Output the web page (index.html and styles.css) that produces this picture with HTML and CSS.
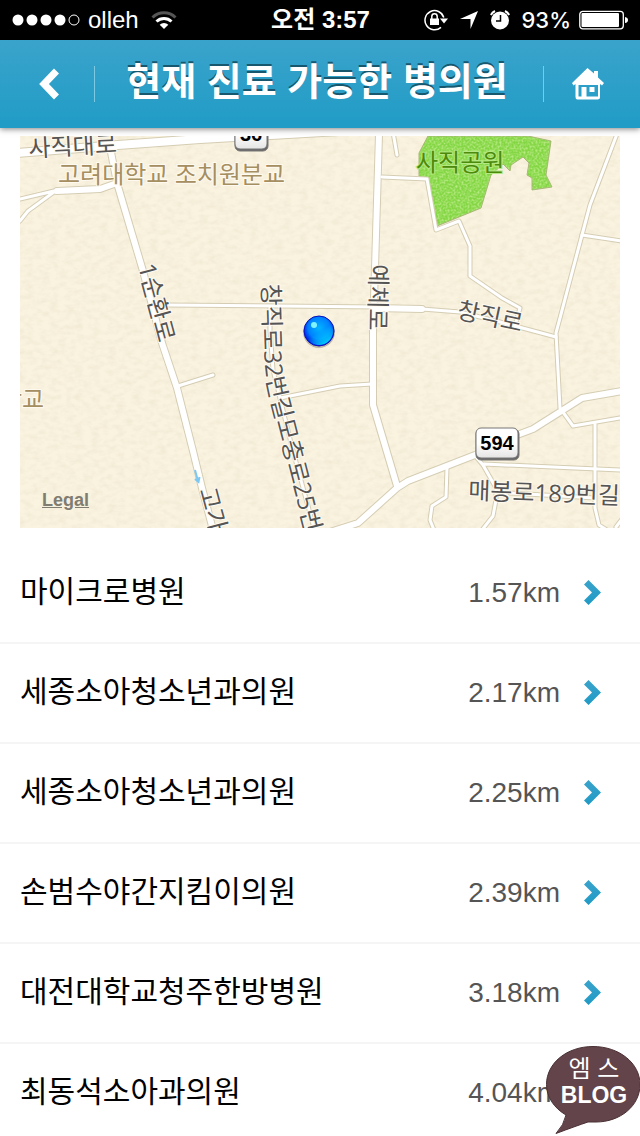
FILE: index.html
```html
<!DOCTYPE html>
<html lang="ko">
<head>
  <meta charset="UTF-8">
  <meta name="viewport" content="width=device-width, initial-scale=1">
  <title>현재 진료 가능한 병의원</title>
  <link rel="stylesheet" href="styles.css">
</head>
<body>
  <div class="app">
    <div class="status-bar">
      <div class="status-left">
        <svg width="68" height="12" viewBox="0 0 68 12" fill="#fff">
          <circle cx="6" cy="6" r="5.5"/>
          <circle cx="20" cy="6" r="5.5"/>
          <circle cx="34" cy="6" r="5.5"/>
          <circle cx="48" cy="6" r="5.5"/>
          <circle cx="62" cy="6" r="5" fill="none" stroke="#fff"/>
        </svg>
        <span>olleh</span>
        <svg class="wifi" width="26" height="20" viewBox="0 0 26 20" fill="none" stroke="#fff" stroke-width="3">
          <path d="M1.5 7.5a16.500 16.500 0 0 1 23 0" stroke="#555"/>
          <path d="M5.500 11.500a10.800 10.800 0 0 1 15 0"/>
          <path d="M13 19l-4.300-4.300a6.200 6.200 0 0 1 8.600 0z" fill="#fff" stroke="none"/>
        </svg>
      </div>
      <div class="status-time">오전 3:57</div>
      <div class="status-right">
        <svg width="24" height="22" viewBox="0 0 24 22">
          <path d="M19.800 8.500A9.600 9.600 0 1 0 17 18.400" fill="none" stroke="#fff" stroke-width="1.500"/>
          <path d="M16 9.500h8l-4 5z" fill="#fff"/>
          <rect x="6" y="9.500" width="9" height="6.500" fill="#fff"/>
          <path d="M7.800 10V7.500a2.700 2.700 0 0 1 5.400 0V10" fill="none" stroke="#fff" stroke-width="1.500"/>
        </svg>
        <svg width="18" height="18" viewBox="0 0 18 18">
          <path d="M18 0L10.500 18V8H0z" fill="#fff"/>
        </svg>
        <svg width="20" height="20" viewBox="0 0 20 20">
          <circle cx="10" cy="10.500" r="9" fill="#fff"/>
          <path d="M.8 5A10 10 0 0 1 5 1M15 1a10 10 0 0 1 4.200 4" fill="none" stroke="#fff" stroke-width="2"/>
          <path d="M10.500 5v6H6" fill="none" stroke="#000" stroke-width="1.500"/>
        </svg>
        <span class="percent">93%</span>
        <svg width="50" height="20" viewBox="0 0 50 20">
          <rect x=".8" y="1.300" width="43.500" height="17.500" rx="3" fill="none" stroke="#fff" stroke-width="1.300"/>
          <rect x="2.500" y="3" width="37.500" height="14" rx="1" fill="#fff"/>
          <path d="M46 7q3 .5 3 3t-3 3z" fill="#fff"/>
        </svg>
      </div>
    </div>

    <header class="header">
      <button class="header-btn" aria-label="뒤로">
        <svg width="20" height="32" viewBox="0 0 20 32" fill="none">
          <path d="M17.500 3L5 16l12.500 13" stroke="#fff" stroke-width="7"/>
        </svg>
      </button>
      <span class="divider"></span>
      <h1>현재 진료 가능한 병의원</h1>
      <span class="divider"></span>
      <button class="header-btn" aria-label="홈">
        <svg width="32" height="32" viewBox="0 0 32 32" fill="#fff">
          <path fill-rule="evenodd" d="M15.500 0L22 5.500V3h4v6.500l6 5.500-2 2.500-2-1.500v13q0 2.500-2.500 2.500h-20Q3.500 31.500 3.500 29V16l-2 1.500L0 15zM6.500 18v10.500h3V19h5v9.500h11.500V17H6.500zM17.500 19h5v5h-5z"/>
        </svg>
      </button>
    </header>

    <div class="map">
      <svg class="map-canvas" viewBox="20 136 600 392">
        <defs>
          <filter id="paper" x="0" y="0" width="100%" height="100%">
            <feTurbulence type="fractalNoise" baseFrequency="0.12 0.2" numOctaves="3" seed="4"/>
            <feColorMatrix values="0 0 0 0 0.55  0 0 0 0 0.48  0 0 0 0 0.3  0.3 0 0 0 -0.11"/>
          </filter>
          <filter id="grass" x="0" y="0" width="100%" height="100%">
            <feTurbulence type="fractalNoise" baseFrequency="0.5" numOctaves="2" seed="9"/>
            <feColorMatrix values="0 0 0 0 0.8  0 0 0 0 1  0 0 0 0 0.5  1.2 0 0 0 -0.45"/>
          </filter>
          <radialGradient id="pin" cx=".5" cy=".4" r=".6">
            <stop offset="0" stop-color="#00b4ff"/>
            <stop offset=".6" stop-color="#0080ff"/>
            <stop offset="1" stop-color="#0000d8"/>
          </radialGradient>
          <linearGradient id="pinGlow" x1=".3" y1=".2" x2=".8" y2="1">
            <stop offset=".4" stop-color="#00e0ff" stop-opacity="0"/>
            <stop offset="1" stop-color="#00f0ff"/>
          </linearGradient>
          <linearGradient id="shield" x1="0" y1="0" x2="0" y2="1">
            <stop offset=".5" stop-color="#fff"/>
            <stop offset="1" stop-color="#e4e4e4"/>
          </linearGradient>
          <clipPath id="parkClip">
            <path d="M428 136l-9 17v23l9 4 9 46 44-18 10-33 12-11 7 7 1-6 12-8 6 6-2 12 5 3v12l20-3-6-12 5-34-23-5z"/>
          </clipPath>
          <path id="longLabel" d="M262 284L264 350Q265 375 269 392L307 540"/>
          <g id="thin">
            <path d="M20 199L54 191M54 192L28 211L20 221"/>
            <path d="M167 305L380 307M422 309L460 312L500 322L556 337"/>
            <path d="M270 308L270 330L273 370L280 398L293 451L314 528"/>
            <path d="M280 398L320 390L340 386L372 384"/>
            <path d="M178 386L213 375"/>
            <path d="M382 177L427 179L436 230L459 221L470 246V276L502 298L520 308L516 322"/>
            <path d="M393 132L397 155"/>
            <path d="M617 134L590 205L582 235L556 333L560 408L573 426L620 418"/>
            <path d="M582 235L622 241"/>
            <path d="M477 458L483 465L496 488V500L493 516L482 530M484 464L622 470"/>
            <path d="M595 424V508L599 525L610 532M510 493L595 498M447 468L446 497L432 506L430 520L434 530M616 527L622 519"/>
          </g>
          <g id="medium">
            <path d="M110 147L117 183L143 271L162 343L177 388L193 451L202 488L213 530"/>
            <path d="M57 191L100 189L117 183"/>
            <path d="M379 134L375 268L373 328V405L397 486M375 308L422 309"/>
            <path d="M330 532L358 523L397 488L408 481L475 455L517 435L533 429L582 398L622 391"/>
          </g>
          <path id="wide" d="M18 153L118 145L200 139L340 131"/>
        </defs>

        <rect x="20" y="136" width="600" height="392" fill="#faf3e0"/>
        <rect x="20" y="136" width="600" height="392" filter="url(#paper)"/>
        <g clip-path="url(#parkClip)">
          <rect x="410" y="136" width="150" height="100" fill="#84d645"/>
          <rect x="410" y="136" width="150" height="100" filter="url(#grass)"/>
        </g>
        <path class="park-edge" d="M428 136l-9 17v23l9 4 9 46 44-18 10-33 12-11 7 7 1-6 12-8 6 6-2 12 5 3v12l20-3-6-12 5-34-23-5z"/>

        <!-- roads: casing first, then the white fill -->
        <g class="casing">
          <use href="#thin" stroke-width="5"/>
          <use href="#medium" stroke-width="8"/>
          <use href="#wide" stroke-width="10"/>
        </g>
        <g class="road">
          <use href="#thin" stroke-width="3"/>
          <use href="#medium" stroke-width="6"/>
          <use href="#wide" stroke-width="8"/>
        </g>
        <path d="M195 470l3 11M195 479l3.500 3 1-5" fill="none" stroke="#7cc8f5" stroke-width="2"/>

        <g class="road-name">
          <text transform="translate(29 157) rotate(-3)">사직대로</text>
          <text transform="translate(138 266) rotate(75)">1순환로</text>
          <text><textPath href="#longLabel">창직로32번길모충로25번길</textPath></text>
          <text transform="translate(370 264) rotate(91)">예체로</text>
          <text transform="translate(456 318) rotate(12)">창직로</text>
          <text transform="translate(468 499) rotate(2)">매봉로189번길</text>
          <text transform="translate(199 490) rotate(75)">고가</text>
        </g>
        <g class="place-name">
          <text x="58" y="183">고려대학교 조치원분교</text>
          <text x="0" y="408">학교</text>
          <text class="park-name" x="416" y="171">사직공원</text>
        </g>

        <g class="shield">
          <rect x="235" y="120" width="33" height="31" rx="5" fill="#666"/>
          <rect x="235" y="119" width="32" height="30" rx="5"/>
          <text x="251" y="141">36</text>
          <rect x="476" y="429" width="43" height="31" rx="5" fill="#666"/>
          <rect x="476" y="428" width="42" height="30" rx="5"/>
          <text x="497" y="450">594</text>
        </g>

        <circle cx="319" cy="332" r="16" fill="#635d50" opacity=".4"/>
        <circle cx="319" cy="331" r="15" fill="url(#pin)" stroke="#0a12c0"/>
        <circle cx="319" cy="331" r="14" fill="url(#pinGlow)"/>
        <circle cx="314" cy="325" r="3" fill="#7ff4ff"/>
      </svg>
      <a class="legal" href="#legal">Legal</a>
    </div>

    <ul class="list">
      <li><a href="#1"><span class="name">마이크로병원</span><span class="distance">1.57km</span><svg class="arrow" viewBox="0 0 18 26"><use href="#arrow"/></svg></a></li>
      <li><a href="#2"><span class="name">세종소아청소년과의원</span><span class="distance">2.17km</span><svg class="arrow" viewBox="0 0 18 26"><use href="#arrow"/></svg></a></li>
      <li><a href="#3"><span class="name">세종소아청소년과의원</span><span class="distance">2.25km</span><svg class="arrow" viewBox="0 0 18 26"><use href="#arrow"/></svg></a></li>
      <li><a href="#4"><span class="name">손범수야간지킴이의원</span><span class="distance">2.39km</span><svg class="arrow" viewBox="0 0 18 26"><use href="#arrow"/></svg></a></li>
      <li><a href="#5"><span class="name">대전대학교청주한방병원</span><span class="distance">3.18km</span><svg class="arrow" viewBox="0 0 18 26"><use href="#arrow"/></svg></a></li>
      <li><a href="#6"><span class="name">최동석소아과의원</span><span class="distance">4.04km</span><svg class="arrow" viewBox="0 0 18 26"><use href="#arrow"/></svg></a></li>
    </ul>

    <a class="blog-badge" href="#blog">
      <svg viewBox="0 0 94 90">
        <path d="M47 .5C73 .5 94 17 94 38.500S74 76 50 76H42Q30 80 10 87.500Q18 79 20 69C8 62 .5 51 .5 38.500C.5 17 21 .5 47 .5z" fill="#62444a" stroke="#4a3035"/>
        <text class="badge-ko" x="48" y="31">엠 스</text>
        <text class="badge-en" x="48" y="57">BLOG</text>
      </svg>
    </a>
  </div>

  <svg class="sprite" width="0" height="0">
    <defs>
      <linearGradient id="arrowFill" x1="0" y1="0" x2="0" y2="1">
        <stop offset="0" stop-color="#39a3cb"/>
        <stop offset="1" stop-color="#1f9bc6"/>
      </linearGradient>
      <path id="arrow" d="M0 4.500L4.500 0L17 12.500L4.500 25L0 20.500L8 12.500z" fill="url(#arrowFill)"/>
    </defs>
  </svg>
</body>
</html>
```

FILE: styles.css
```css
* {
  box-sizing: border-box;
}
body {
  margin: 0;
  background-color: #fff;
  color: #000;
  font-family: "Liberation Sans", "Noto Sans CJK KR", sans-serif;
}
.app {
  position: relative;
  display: flex;
  flex-direction: column;
  height: 100vh;
  overflow: hidden;
}

/* status bar */
.status-bar {
  display: grid;
  grid-template-columns: 1fr auto 1fr;
  align-items: center;
  height: 40px;
  flex: none;
  padding: 0 11px 0 12px;
  background-color: #000;
  color: #fff;
  font-size: 24px;
  line-height: 40px;
}
.status-left {
  display: flex;
  align-items: center;
  gap: 8px;
}
.wifi {
  margin-left: 4px;
}
.status-time {
  font-weight: bold;
}
.status-right {
  display: flex;
  align-items: center;
  justify-content: flex-end;
  gap: 12px;
}
.percent {
  font-family: Inter, sans-serif;
  font-size: 22px;
  font-weight: 500;
  margin-right: -4px;
}

/* header */
.header {
  position: relative;
  display: flex;
  align-items: center;
  height: 88px;
  flex: none;
  background: linear-gradient(#3aa3cb, #209cc6);
  box-shadow: 0 1px 6px rgba(0, 0, 0, 0.5);
}
.header-btn {
  display: flex;
  align-items: center;
  justify-content: center;
  width: 96px;
  height: 88px;
  padding: 0 8px 0 0;
  border: none;
  background: none;
  cursor: pointer;
}
.header-btn:first-child {
  width: 94px;
  padding: 0 0 0 4px;
}
.divider {
  width: 1px;
  height: 36px;
  background-color: #7cc9e4;
}
.header h1 {
  flex: 1;
  margin: 0;
  padding: 0 4px 10px 0;
  color: #fff;
  font-size: 38px;
  font-weight: bold;
  line-height: 56px;
  text-align: center;
  white-space: nowrap;
  font-family: "Noto Sans CJK KR", sans-serif;
  text-shadow: 0 -2px 0 #17586f;
}

/* map */
.map {
  position: relative;
  flex: none;
  margin: 8px 20px 16px;
}
.map-canvas {
  display: block;
  width: 100%;
}
.casing, .road {
  fill: none;
  stroke-linejoin: round;
  stroke-linecap: round;
}
.casing {
  stroke: #d5cdb3;
}
.road {
  stroke: #fff;
}
.park-edge {
  fill: none;
  stroke: #a9b878;
}
.road-name, .place-name {
  font-family: "Open Sans", "Noto Sans CJK KR", sans-serif;
  font-size: 24px;
  fill: #555;
  stroke: #fffaf0;
  stroke-width: 2px;
  paint-order: stroke;
}
.place-name {
  fill: #a58e60;
}
.park-name {
  fill: #4c8a0b;
  stroke: #b5e882;
}
.shield rect {
  stroke: #777;
}
.shield rect:nth-of-type(even) {
  fill: url(#shield);
}
.shield text {
  font-size: 20px;
  font-weight: bold;
  text-anchor: middle;
}
.legal {
  position: absolute;
  left: 22px;
  bottom: 18px;
  color: #7f7c72;
  font-size: 18px;
  font-weight: bold;
  line-height: 20px;
}

/* hospital list */
.list {
  flex: 1;
  min-height: 0;
  margin: 0;
  padding: 0;
  overflow-y: auto;
  scrollbar-width: none;
  list-style: none;
}
.list li {
  border-bottom: 2px solid #f5f5f5;
}
.list a {
  display: flex;
  align-items: center;
  height: 98px;
  padding: 0 38px 0 20px;
  color: #000;
  text-decoration: none;
}
.name {
  flex: 1;
  padding-bottom: 8px;
  font-family: "Noto Sans CJK KR", sans-serif;
  font-size: 30px;
  line-height: 40px;
}
.distance {
  margin-right: 24px;
  color: #555;
  font-size: 28px;
}
.arrow {
  width: 18px;
  height: 26px;
}

/* blog badge over the list */
.blog-badge {
  position: absolute;
  right: 0;
  bottom: 0;
  width: 94px;
}
.blog-badge svg {
  display: block;
}
.blog-badge text {
  fill: #fff;
  text-anchor: middle;
}
.badge-ko {
  font-family: "Noto Sans CJK KR", sans-serif;
  font-size: 24px;
}
.badge-en {
  font-size: 23px;
  font-weight: bold;
}
.sprite {
  position: absolute;
}
```
